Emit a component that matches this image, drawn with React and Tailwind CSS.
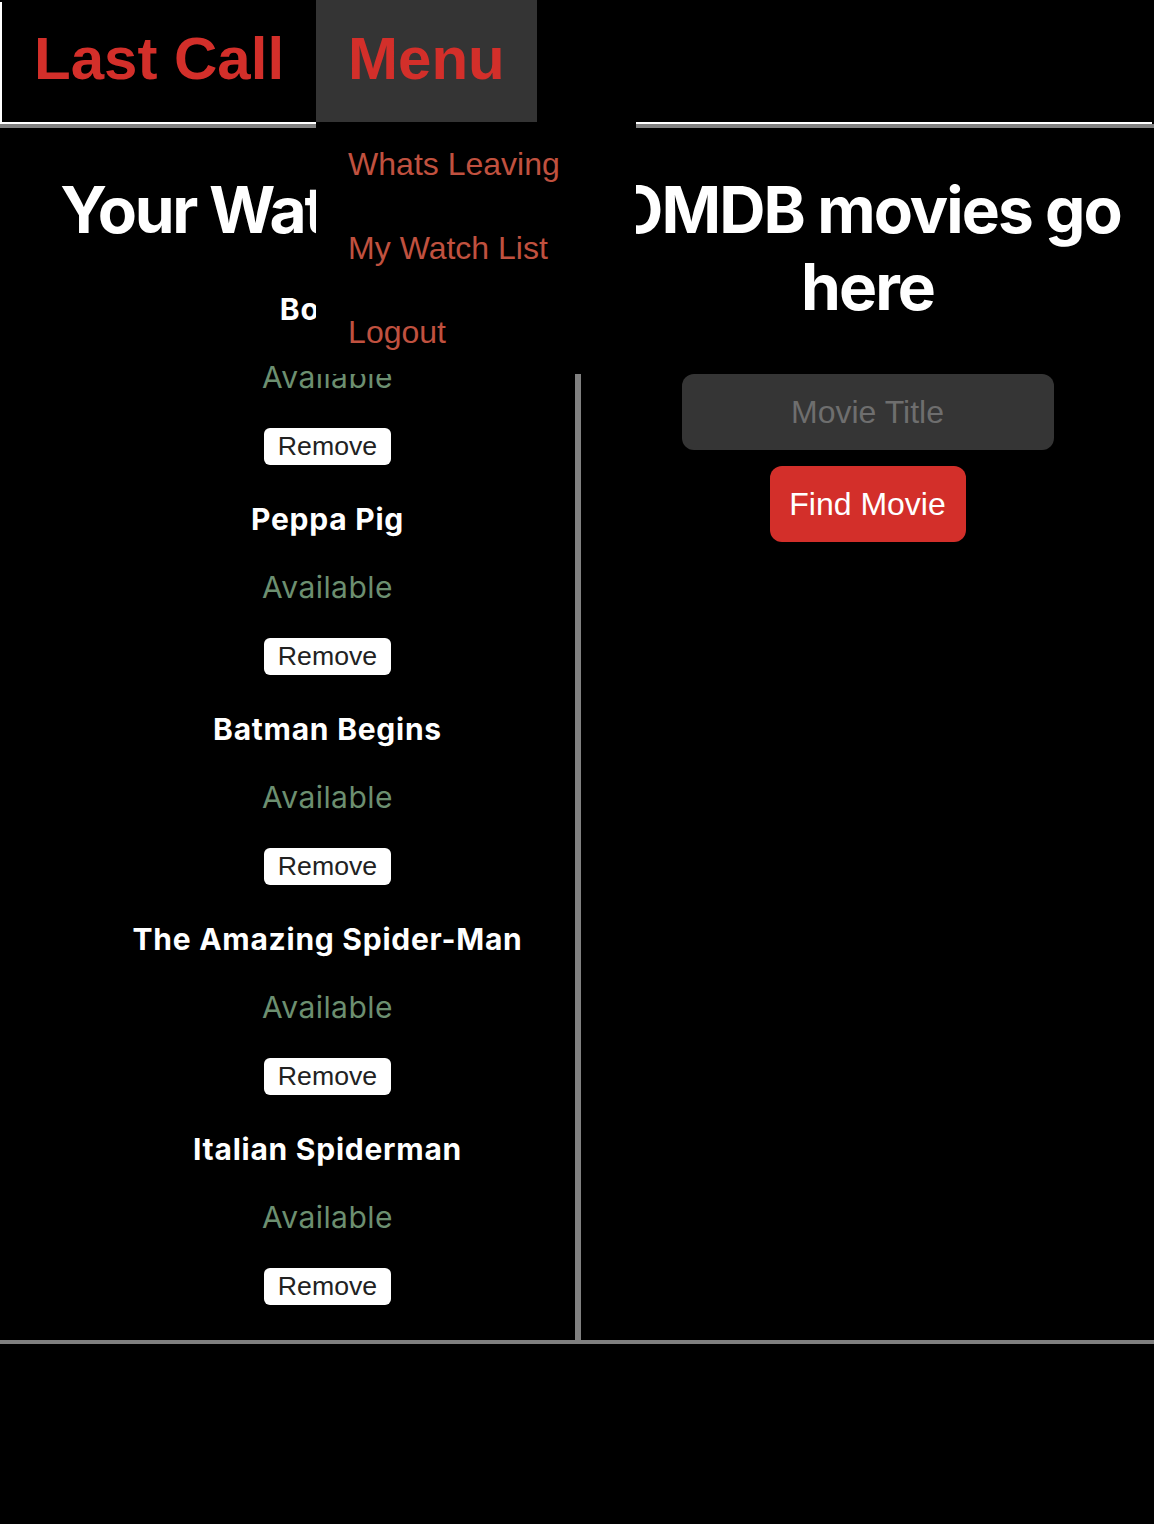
import React from "react";

const items = ["Bones", "Peppa Pig", "Batman Begins", "The Amazing Spider-Man", "Italian Spiderman"];

export default function App() {
  return (
    <div className="min-h-[1524px] bg-black font-['Inter','Noto_Sans',sans-serif] text-white">
      <header className="relative z-10 mb-[2px] ml-[2px] flex h-[122px] bg-black shadow-[-2px_2px_0_#ffffff] font-['Liberation_Sans',Arial,sans-serif] text-[60px] font-bold leading-[69px] text-[#d32f2a]">
        <div className="pl-[32px] pr-[32px] pt-[24px] whitespace-nowrap">Last Call</div>
        <div className="relative bg-[#343434] px-[32px] pt-[24px] whitespace-nowrap">
          Menu
          <div className="absolute left-0 top-full w-[320px] bg-black text-[32px] font-normal leading-[37px] text-[#c0513f]">
            <div className="flex h-[84px] items-center px-[32px]">Whats Leaving</div>
            <div className="flex h-[84px] items-center px-[32px]">My Watch List</div>
            <div className="flex h-[84px] items-center px-[32px]">Logout</div>
          </div>
        </div>
      </header>

      <main className="flex border-y-4 border-[#808080]">
        <section className="w-[581px] shrink-0 border-r-[6px] border-[#808080] pt-[43px] pb-[35px]">
          <h1 className="mb-[43px] text-center text-[64px] font-bold leading-[77px] tracking-[-0.035em] whitespace-nowrap">
            Your Watch List
          </h1>
          <ul className="pl-[80px]">
            {items.map((t, i) => (
              <li key={t} className={"flex flex-col items-center " + (i > 0 ? "mt-[36px]" : "")}>
                <div className="h-[36px] text-[30px] font-bold leading-[36px] tracking-[0.025em] whitespace-nowrap">{t}</div>
                <div className="mt-[31px] text-[30px] leading-[38px] tracking-[0.015em] text-[#6c8f70]">Available</div>
                <button className="mt-[32px] h-[37px] rounded-[6px] bg-white px-[14px] font-['Liberation_Sans',Arial,sans-serif] text-[26.67px] leading-[31px] text-[#222222]">
                  Remove
                </button>
              </li>
            ))}
          </ul>
        </section>

        <section className="flex flex-1 flex-col items-center pt-[43px]">
          <h1 className="text-center text-[64px] font-bold leading-[77px] tracking-[-0.03em]">
            OMDB movies go here
          </h1>
          <input
            placeholder="Movie Title"
            className="mt-[49px] h-[76px] w-[372px] rounded-[12px] bg-[#353535] text-center font-['Liberation_Sans',Arial,sans-serif] text-[32px] text-white outline-none placeholder:text-[#6e6e6e]"
          />
          <button className="mt-[16px] h-[76px] w-[196px] rounded-[12px] bg-[#d32f2a] font-['Liberation_Sans',Arial,sans-serif] text-[32px] text-white">
            Find Movie
          </button>
        </section>
      </main>
    </div>
  );
}
